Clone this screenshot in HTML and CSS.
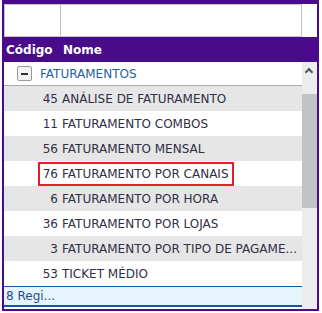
FILE: index.html
```html
<!DOCTYPE html>
<html lang="pt">
<head>
  <meta charset="UTF-8" />
  <title>Relatórios</title>
  <link rel="stylesheet" href="styles.css">
</head>
<body>
  <div class="grid">
    <div class="filter-row">
      <div class="filter-cell code"></div>
      <div class="filter-cell name"></div>
    </div>
    <div class="head-row">
      <span class="col-code">Código</span>
      <span class="col-name">Nome</span>
    </div>
    <div class="body">
      <div class="rows">
        <div class="group-row">
          <span class="toggle"></span>
          <span class="group-title">FATURAMENTOS</span>
        </div>
        <div class="row alt"><span class="num">45</span><span class="txt">ANÁLISE DE FATURAMENTO</span></div>
        <div class="row"><span class="num">11</span><span class="txt">FATURAMENTO COMBOS</span></div>
        <div class="row alt"><span class="num">56</span><span class="txt">FATURAMENTO MENSAL</span></div>
        <div class="row"><span class="num">76</span><span class="txt">FATURAMENTO POR CANAIS</span><span class="mark"></span></div>
        <div class="row alt"><span class="num">6</span><span class="txt">FATURAMENTO POR HORA</span></div>
        <div class="row"><span class="num">36</span><span class="txt">FATURAMENTO POR LOJAS</span></div>
        <div class="row alt"><span class="num">3</span><span class="txt">FATURAMENTO POR TIPO DE PAGAME...</span></div>
        <div class="row"><span class="num">53</span><span class="txt">TICKET MÉDIO</span></div>
        <div class="footer">8 Regi...</div>
      </div>
      <div class="scrollbar">
        <span class="arrow"></span>
        <span class="thumb"></span>
      </div>
    </div>
  </div>
</body>
</html>
```
FILE: styles.css
```css
html, body {
  margin: 0;
  padding: 0;
  background: #fff;
}
* { box-sizing: border-box; }

.grid {
  margin: 0 3px 0 2px;
  width: 317px;
  height: 311px;
  border: 2px solid #4a0b8b;
  border-top-width: 4px;
  font-family: "DejaVu Sans", sans-serif;
  font-size: 12px;
  display: flex;
  flex-direction: column;
}

.filter-row {
  display: flex;
  height: 33px;
  padding-right: 15px;
}
.filter-cell {
  border: 1px solid #c4c4c4;
  height: 33px;
}
.filter-cell.code { width: 57px; }
.filter-cell.name { flex: 1; border-left: none; }

.head-row {
  height: 25px;
  background: #4a0b8b;
  color: #fff;
  font-weight: bold;
  display: flex;
  align-items: center;
}
.col-code { width: 57px; padding-left: 2px; }
.col-name { padding-left: 2px; }

.body {
  flex: 1;
  display: flex;
}
.rows {
  flex: 1;
  display: flex;
  flex-direction: column;
  min-width: 0;
}

.group-row {
  height: 24px;
  display: flex;
  align-items: center;
  border-bottom: 1px solid #a9a9a9;
  color: #1f5ea8;
}
.toggle {
  width: 15px;
  height: 15px;
  margin-left: 13px;
  margin-right: 8px;
  border: 1px solid #9a9a9a;
  border-radius: 2px;
  background: #f4f4f4;
  position: relative;
}
.toggle::after {
  content: "";
  position: absolute;
  left: 3px;
  top: 6px;
  width: 7px;
  height: 2px;
  background: #333;
}

.row {
  height: 25px;
  display: flex;
  align-items: center;
  color: #2f2f45;
  position: relative;
  white-space: nowrap;
}
.row.alt { background: #e6e6e6; }
.num {
  width: 54px;
  text-align: right;
  flex: none;
}
.txt {
  padding-left: 4px;
}
.mark {
  position: absolute;
  left: 34px;
  top: 1px;
  width: 196px;
  height: 24px;
  border: 2px solid #e61e2a;
}

.footer {
  height: 21px;
  background: #e6f4fd;
  border-top: 1px solid #0c5aa6;
  border-bottom: 2px solid #0c5aa6;
  color: #1d4f86;
  padding-left: 2px;
  display: flex;
  align-items: center;
  white-space: nowrap;
}

.scrollbar {
  width: 15px;
  background: #ececec;
  position: relative;
}
.arrow {
  position: absolute;
  left: 4px;
  top: 7px;
  width: 6px;
  height: 6px;
  border-left: 2px solid #555;
  border-top: 2px solid #555;
  transform: rotate(45deg);
}
.thumb {
  position: absolute;
  left: 0;
  top: 32px;
  width: 15px;
  height: 114px;
  background: #c2c2c2;
}
```
